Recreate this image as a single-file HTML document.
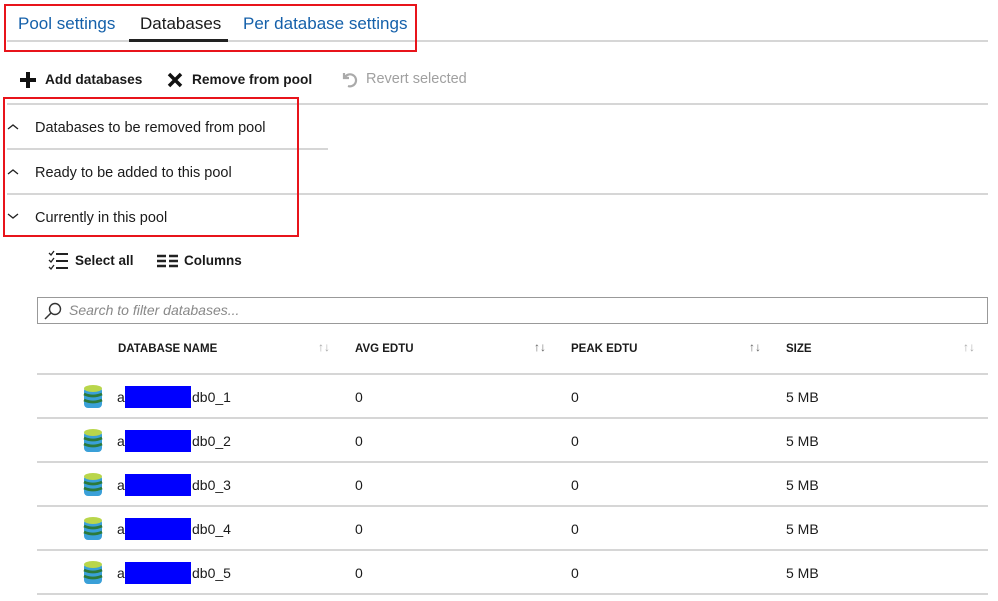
<!DOCTYPE html>
<html><head><style>
*{margin:0;padding:0;box-sizing:border-box}
body{width:998px;height:601px;background:#fff;font-family:"Liberation Sans",sans-serif;color:#1a1a1a;position:relative;overflow:hidden}
.a{position:absolute;white-space:nowrap}
.hl{position:absolute;height:2px;background:#d6d6d6}
.tab{font-size:17px;top:14px}
.tb{font-size:13.7px;font-weight:bold;top:72px}
.sec{font-size:14.5px;left:35px}
.chev{left:7px}
.hd{font-size:11.5px;font-weight:bold;top:343px}
.sa{font-size:12px;color:#aaa;top:340px}
.c{font-size:14px}
.blue{position:absolute;background:#0000ff;width:66px;height:22px;left:125px}
</style></head><body>
<div class="a tab" style="left:18px;color:#1460aa">Pool settings</div>
<div class="a tab" style="left:140px;color:#1a1a1a">Databases</div>
<div class="a tab" style="left:243px;color:#1460aa">Per database settings</div>
<div class="hl" style="left:7px;top:40px;width:981px"></div>
<div class="a" style="left:129px;top:39px;width:99px;height:3px;background:#222"></div>
<div class="a" style="left:4px;top:4px;width:413px;height:48px;border:2px solid #e8141b"></div>

<svg class="a" style="left:19px;top:71px" width="18" height="18"><path d="M9 1v16M1 9h16" stroke="#111" stroke-width="4"/></svg>
<div class="a tb" style="left:45px">Add databases</div>
<svg class="a" style="left:167px;top:72px" width="16" height="16"><path d="M2 2l12 12M14 2L2 14" stroke="#111" stroke-width="3.5"/></svg>
<div class="a tb" style="left:192px">Remove from pool</div>
<svg class="a" style="left:340px;top:70px" width="18" height="18"><path d="M4 3v5h5M4.5 8A6 6 0 1 1 8 16" stroke="#aaa" stroke-width="2.2" fill="none"/></svg>
<div class="a tb" style="left:366px;color:#a0a0a0;font-weight:normal;font-size:14.5px;top:71px">Revert selected</div>

<div class="hl" style="left:7px;top:103px;width:981px"></div>
<svg class="a chev" style="top:123px" width="12" height="8"><path d="M1 6l5-4 5 4" stroke="#222" stroke-width="1.3" fill="none"/></svg>
<div class="a sec" style="top:120px">Databases to be removed from pool</div>
<div class="hl" style="left:7px;top:148px;width:321px"></div>
<svg class="a chev" style="top:168px" width="12" height="8"><path d="M1 6l5-4 5 4" stroke="#222" stroke-width="1.3" fill="none"/></svg>
<div class="a sec" style="top:165px">Ready to be added to this pool</div>
<div class="hl" style="left:7px;top:193px;width:981px"></div>
<svg class="a chev" style="top:212px" width="12" height="8"><path d="M1 2l5 4 5-4" stroke="#222" stroke-width="1.3" fill="none"/></svg>
<div class="a sec" style="top:210px">Currently in this pool</div>
<div class="a" style="left:3px;top:97px;width:296px;height:140px;border:2px solid #e8141b"></div>

<svg class="a" style="left:48px;top:250px" width="22" height="20"><path d="M1 3l2 2 3-4M1 10l2 2 3-4M1 17l2 2 3-4" stroke="#222" stroke-width="1.3" fill="none"/><path d="M8 4h12M8 11h12M8 18h12" stroke="#222" stroke-width="2"/></svg>
<div class="a" style="left:75px;top:253px;font-size:13.5px;font-weight:bold">Select all</div>
<svg class="a" style="left:157px;top:254px" width="22" height="14"><path d="M0 2h9M0 7h9M0 12h9M12 2h9M12 7h9M12 12h9" stroke="#222" stroke-width="2.4"/></svg>
<div class="a" style="left:184px;top:253px;font-size:13.5px;font-weight:bold">Columns</div>

<div class="a" style="left:37px;top:297px;width:951px;height:27px;border:1px solid #999"></div>
<svg class="a" style="left:43px;top:301px" width="20" height="20"><circle cx="12" cy="8" r="5.5" stroke="#333" stroke-width="1.4" fill="none"/><path d="M8 12l-6 6" stroke="#333" stroke-width="1.5"/></svg>
<div class="a" style="left:69px;top:302px;font-size:14px;font-style:italic;color:#888">Search to filter databases...</div>

<div class="a hd" style="left:118px">DATABASE NAME</div>
<div class="a hd" style="left:355px">AVG EDTU</div>
<div class="a hd" style="left:571px">PEAK EDTU</div>
<div class="a hd" style="left:786px">SIZE</div>
<div class="a sa" style="left:318px">↑↓</div>
<div class="a sa" style="left:534px;color:#666">↑↓</div>
<div class="a sa" style="left:749px;color:#666">↑↓</div>
<div class="a sa" style="left:963px">↑↓</div>
<div class="hl" style="left:37px;top:373px;width:951px"></div>

<div class="a" style="left:0;top:374px;width:998px;height:44px">
<svg class="a" style="left:83px;top:10px" width="20" height="26"><rect x="1" y="3" width="18" height="21" rx="4" fill="#3aa0d8"/><ellipse cx="10" cy="4.5" rx="9" ry="3.5" fill="#b9d64b"/><path d="M1 10q9 4 18 0M1 16q9 4 18 0" stroke="#2c7a3a" stroke-width="2.8" fill="none"/></svg>
<div class="a c" style="left:117px;top:15px">a</div><div class="blue" style="top:12px"></div>
<div class="a c" style="left:192px;top:15px">db0_1</div>
<div class="a c" style="left:355px;top:15px">0</div><div class="a c" style="left:571px;top:15px">0</div><div class="a c" style="left:786px;top:15px">5 MB</div>
<div class="hl" style="left:37px;top:43px;width:951px"></div></div>
<div class="a" style="left:0;top:418px;width:998px;height:44px">
<svg class="a" style="left:83px;top:10px" width="20" height="26"><rect x="1" y="3" width="18" height="21" rx="4" fill="#3aa0d8"/><ellipse cx="10" cy="4.5" rx="9" ry="3.5" fill="#b9d64b"/><path d="M1 10q9 4 18 0M1 16q9 4 18 0" stroke="#2c7a3a" stroke-width="2.8" fill="none"/></svg>
<div class="a c" style="left:117px;top:15px">a</div><div class="blue" style="top:12px"></div>
<div class="a c" style="left:192px;top:15px">db0_2</div>
<div class="a c" style="left:355px;top:15px">0</div><div class="a c" style="left:571px;top:15px">0</div><div class="a c" style="left:786px;top:15px">5 MB</div>
<div class="hl" style="left:37px;top:43px;width:951px"></div></div>
<div class="a" style="left:0;top:462px;width:998px;height:44px">
<svg class="a" style="left:83px;top:10px" width="20" height="26"><rect x="1" y="3" width="18" height="21" rx="4" fill="#3aa0d8"/><ellipse cx="10" cy="4.5" rx="9" ry="3.5" fill="#b9d64b"/><path d="M1 10q9 4 18 0M1 16q9 4 18 0" stroke="#2c7a3a" stroke-width="2.8" fill="none"/></svg>
<div class="a c" style="left:117px;top:15px">a</div><div class="blue" style="top:12px"></div>
<div class="a c" style="left:192px;top:15px">db0_3</div>
<div class="a c" style="left:355px;top:15px">0</div><div class="a c" style="left:571px;top:15px">0</div><div class="a c" style="left:786px;top:15px">5 MB</div>
<div class="hl" style="left:37px;top:43px;width:951px"></div></div>
<div class="a" style="left:0;top:506px;width:998px;height:44px">
<svg class="a" style="left:83px;top:10px" width="20" height="26"><rect x="1" y="3" width="18" height="21" rx="4" fill="#3aa0d8"/><ellipse cx="10" cy="4.5" rx="9" ry="3.5" fill="#b9d64b"/><path d="M1 10q9 4 18 0M1 16q9 4 18 0" stroke="#2c7a3a" stroke-width="2.8" fill="none"/></svg>
<div class="a c" style="left:117px;top:15px">a</div><div class="blue" style="top:12px"></div>
<div class="a c" style="left:192px;top:15px">db0_4</div>
<div class="a c" style="left:355px;top:15px">0</div><div class="a c" style="left:571px;top:15px">0</div><div class="a c" style="left:786px;top:15px">5 MB</div>
<div class="hl" style="left:37px;top:43px;width:951px"></div></div>
<div class="a" style="left:0;top:550px;width:998px;height:44px">
<svg class="a" style="left:83px;top:10px" width="20" height="26"><rect x="1" y="3" width="18" height="21" rx="4" fill="#3aa0d8"/><ellipse cx="10" cy="4.5" rx="9" ry="3.5" fill="#b9d64b"/><path d="M1 10q9 4 18 0M1 16q9 4 18 0" stroke="#2c7a3a" stroke-width="2.8" fill="none"/></svg>
<div class="a c" style="left:117px;top:15px">a</div><div class="blue" style="top:12px"></div>
<div class="a c" style="left:192px;top:15px">db0_5</div>
<div class="a c" style="left:355px;top:15px">0</div><div class="a c" style="left:571px;top:15px">0</div><div class="a c" style="left:786px;top:15px">5 MB</div>
<div class="hl" style="left:37px;top:43px;width:951px"></div></div>
</body></html>
